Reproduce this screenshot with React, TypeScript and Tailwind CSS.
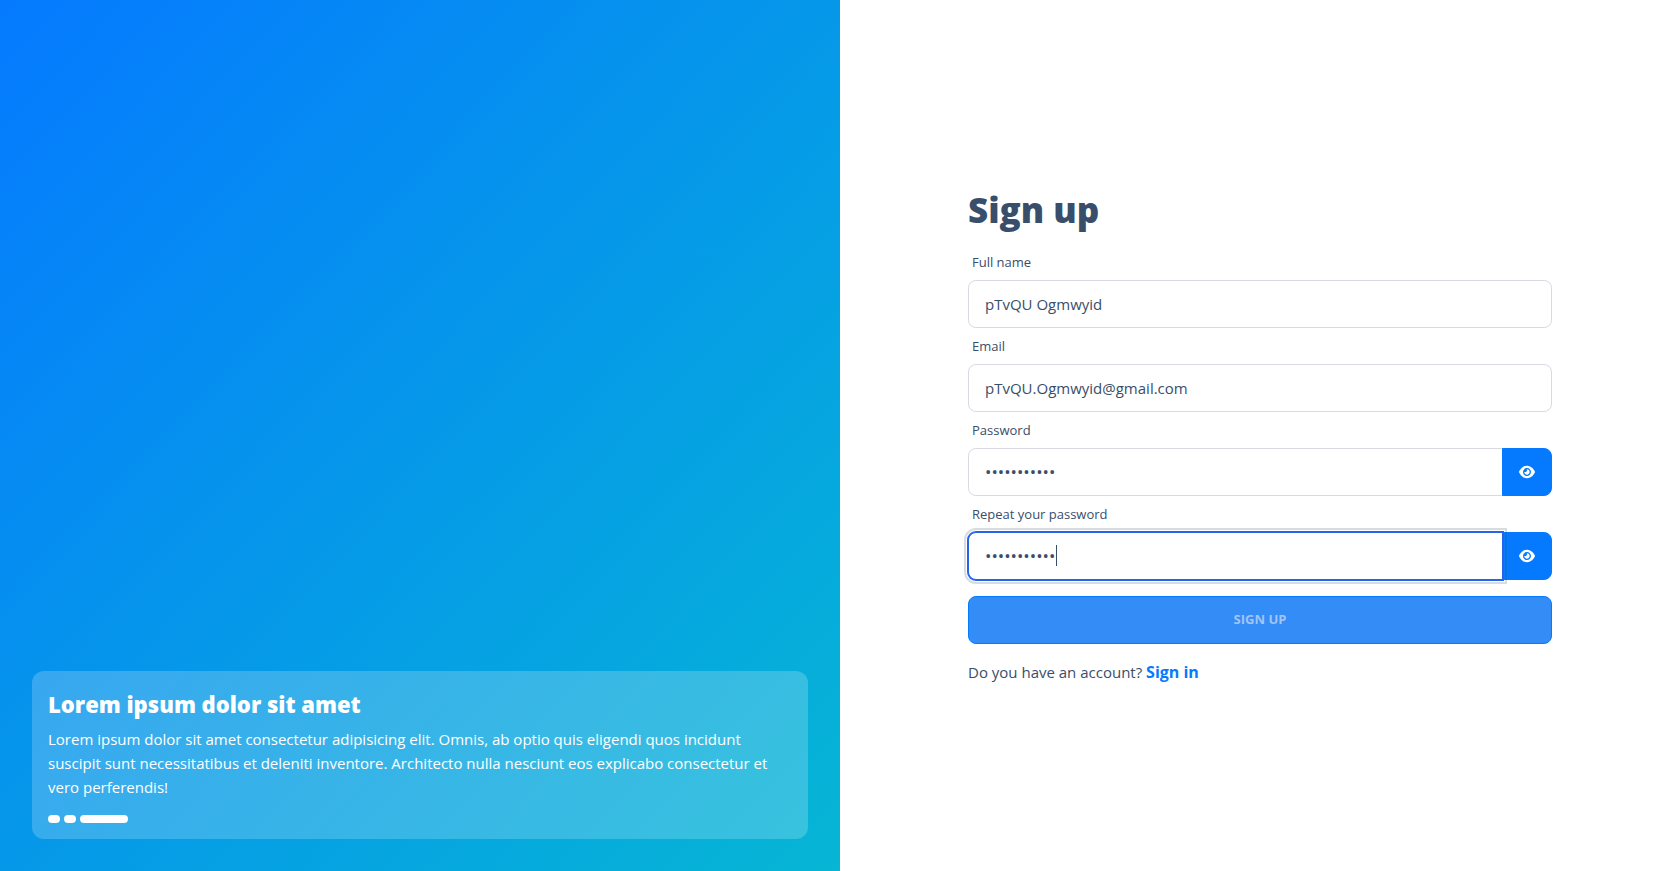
import { useState, type ReactNode } from "react";

const inputBase = "h-12 w-full min-w-0 border bg-white px-4 text-[#394e6a]";

function EyeIcon() {
  return (
    <svg viewBox="0 0 576 512" fill="currentColor" aria-hidden="true" className="size-4">
      <path d="M279.6 160.4C282.4 160.1 285.2 160 288 160C341 160 384 202.1 384 256C384 308.1 341 352 288 352C234.1 352 192 308.1 192 256C192 253.2 192.1 250.4 192.4 247.6C201.7 252.1 212.5 256 224 256C259.3 256 288 227.3 288 192C288 180.5 284.1 169.7 279.6 160.4zM480.6 112.6C527.4 156 558.7 207.1 573.5 243.7C576.8 251.6 576.8 260.4 573.5 268.3C558.7 304 527.4 355.1 480.6 399.4C433.5 443.2 368.8 480 288 480C207.2 480 142.5 443.2 95.42 399.4C48.62 355.1 17.34 304 2.461 268.3C-.8205 260.4-.8205 251.6 2.461 243.7C17.34 207.1 48.62 156 95.42 112.6C142.5 68.84 207.2 32 288 32C368.8 32 433.5 68.84 480.6 112.6zM288 112C208.5 112 144 176.5 144 256C144 335.5 208.5 400 288 400C367.5 400 432 335.5 432 256C432 176.5 367.5 112 288 112z" />
    </svg>
  );
}

function Field({ id, label, children }: { id: string; label: string; children: ReactNode }) {
  return (
    <div className="flex flex-col">
      <label htmlFor={id} className="px-1 py-2 text-[13px] leading-5">
        {label}
      </label>
      {children}
    </div>
  );
}

function TextField({ id, label, type, initial }: { id: string; label: string; type: string; initial: string }) {
  const [value, setValue] = useState(initial);
  return (
    <Field id={id} label={label}>
      <input
        id={id}
        type={type}
        value={value}
        onChange={(e) => setValue(e.target.value)}
        className={`${inputBase} rounded-lg border-[#d7dae1] text-[15px] outline-none`}
      />
    </Field>
  );
}

function PasswordField({ id, label, active = false }: { id: string; label: string; active?: boolean }) {
  const [value, setValue] = useState("pTvQU.12345");
  const [visible, setVisible] = useState(false);
  return (
    <Field id={id} label={label}>
      <div className="relative flex">
        <input
          id={id}
          type={visible ? "text" : "password"}
          value={value}
          autoFocus={active}
          onChange={(e) => setValue(e.target.value)}
          className={
            active
              ? `${inputBase} relative z-10 rounded-l-lg border-[#2563eb] text-[17px] caret-transparent ring-1 ring-[#2563eb] outline-2 outline-offset-2 outline-[#394e6a]/20 outline-solid`
              : `${inputBase} rounded-l-lg border-[#d7dae1] text-[17px] outline-none`
          }
        />
        {active && <span aria-hidden="true" className="absolute top-[13px] left-[88px] z-20 h-[21px] w-px bg-[#394e6a]" />}
        <button
          type="button"
          aria-label="Toggle password visibility"
          onClick={() => setVisible(!visible)}
          className="-ml-px flex h-12 shrink-0 items-center rounded-r-lg border border-[#057aff] bg-[#057aff] px-4 text-white"
        >
          <EyeIcon />
        </button>
      </div>
    </Field>
  );
}

export default function App() {
  return (
    <div className="grid min-h-screen grid-cols-2 bg-white font-['Open_Sans','Noto_Sans',sans-serif] text-[#394e6a]">
      <aside className="flex flex-col justify-end bg-linear-to-br/srgb from-[#057aff] to-[#06b6d4] p-8">
        <section className="rounded-xl bg-white/20 p-4 text-white">
          <h2 className="text-[22px] leading-[34px] font-extrabold">Lorem ipsum dolor sit amet</h2>
          <p className="mt-1.5 text-[15px] leading-6 font-medium">
            Lorem ipsum dolor sit amet consectetur adipisicing elit. Omnis, ab optio quis eligendi quos incidunt
            suscipit sunt necessitatibus et deleniti inventore. Architecto nulla nesciunt eos explicabo consectetur
            et vero perferendis!
          </p>
          <div className="mt-4 flex gap-1">
            <span className="h-2 w-3 rounded bg-white" />
            <span className="h-2 w-3 rounded bg-white" />
            <span className="h-2 w-12 rounded bg-white" />
          </div>
        </section>
      </aside>
      <main className="flex flex-col justify-center px-32">
        <h1 className="mb-3 text-[35px] leading-11 font-extrabold">Sign up</h1>
        <form onSubmit={(e) => e.preventDefault()}>
          <TextField id="name" label="Full name" type="text" initial="pTvQU Ogmwyid" />
          <TextField id="email" label="Email" type="email" initial="pTvQU.Ogmwyid@gmail.com" />
          <PasswordField id="password" label="Password" />
          <PasswordField id="repeat" label="Repeat your password" active />
          <button
            type="submit"
            className="mt-4 h-12 w-full rounded-lg border border-[#057aff] bg-[#348cf7] text-[13px] font-bold text-[#a3c4f5] uppercase"
          >
            Sign up
          </button>
        </form>
        <p className="mt-4 text-[15px] leading-6">
          Do you have an account?{" "}
          <a href="#signin" className="text-base font-bold text-[#057aff]">
            Sign in
          </a>
        </p>
      </main>
    </div>
  );
}
